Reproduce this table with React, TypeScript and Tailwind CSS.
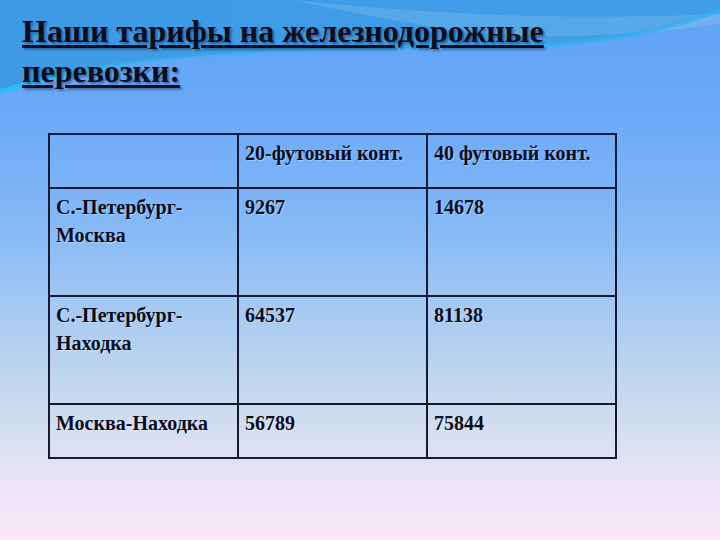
// Slide: railway freight tariffs, title + 3x4 price table over an "ocean" backdrop.
const rows = [
  { route: ['С.-Петербург-', 'Москва'], c20: '9267', c40: '14678', tall: true },
  { route: ['С.-Петербург-', 'Находка'], c20: '64537', c40: '81138', tall: true },
  { route: ['Москва-Находка'], c20: '56789', c40: '75844', tall: false },
];

function Backdrop() {
  return (
    <svg className="absolute inset-0 w-full h-full" viewBox="0 0 720 540" preserveAspectRatio="none">
      <defs>
        <linearGradient id="body" x1="0" y1="0" x2="0" y2="1">
          <stop offset="0" stopColor="#5ea2f4" />
          <stop offset="0.2" stopColor="#6aa9f8" />
          <stop offset="0.4" stopColor="#82b7f6" />
          <stop offset="0.58" stopColor="#a7caf1" />
          <stop offset="0.75" stopColor="#cbdaee" />
          <stop offset="0.87" stopColor="#e6e3f3" />
          <stop offset="1" stopColor="#fce6fa" />
        </linearGradient>
        <linearGradient id="band" x1="0" y1="0" x2="1" y2="0">
          <stop offset="0" stopColor="#3f9ae6" />
          <stop offset="1" stopColor="#419ee6" />
        </linearGradient>
        <linearGradient id="edge" x1="0" y1="0" x2="1" y2="0">
          <stop offset="0" stopColor="#22c4f2" stopOpacity="0.95" />
          <stop offset="0.25" stopColor="#3fb0f0" stopOpacity="0.4" />
          <stop offset="0.7" stopColor="#2cb6ee" stopOpacity="0.55" />
          <stop offset="1" stopColor="#2ab0ea" stopOpacity="0.6" />
        </linearGradient>
      </defs>
      <rect width="720" height="540" fill="url(#body)" />
      <path d="M0,0 H720 V10 C640,40 560,48 450,48 C300,48 120,52 0,92 Z" fill="url(#band)" />
      <path d="M290,0 C400,10 520,22 720,14 V24 C600,40 520,38 450,30 C390,20 340,10 290,0 Z" fill="#ffffff" opacity="0.12" />
      <path d="M0,92 C120,52 300,48 450,48 C560,48 640,40 720,10" fill="none" stroke="url(#edge)" strokeWidth="5" />
    </svg>
  );
}

export default function App() {
  return (
    <div className="relative w-[720px] h-[540px] overflow-hidden font-['Liberation_Serif','Times_New_Roman',serif] text-[#0a0d1f]">
      <Backdrop />
      <div className="relative flex flex-col">
        <h1 className="pl-[22px] pt-[11px] text-[32px] leading-[40px] font-bold underline decoration-[3px] underline-offset-[3px] [text-shadow:2px_2px_2px_rgba(0,0,30,0.35)]">
          Наши тарифы на железнодорожные
          <br />
          перевозки:
        </h1>
        <table className="ml-[48px] mt-[42px] w-[568px] table-fixed border-collapse text-[20px] leading-[28px] font-bold [text-shadow:1px_1px_1px_rgba(255,255,255,0.35)]">
          <tbody>
            <tr className="h-[54px]">
              <td className="w-[189px] border-2 border-[#141a38] align-top px-[6px] py-[4px]"></td>
              <td className="w-[189px] border-2 border-[#141a38] align-top px-[6px] py-[4px]">20-футовый конт.</td>
              <td className="w-[189px] border-2 border-[#141a38] align-top px-[6px] py-[4px]">40 футовый конт.</td>
            </tr>
            {rows.map((r) => (
              <tr key={r.c20} className={r.tall ? 'h-[108px]' : 'h-[54px]'}>
                <td className="border-2 border-[#141a38] align-top px-[6px] py-[4px]">
                  {r.route.map((line) => (
                    <div key={line}>{line}</div>
                  ))}
                </td>
                <td className="border-2 border-[#141a38] align-top px-[6px] py-[4px]">{r.c20}</td>
                <td className="border-2 border-[#141a38] align-top px-[6px] py-[4px]">{r.c40}</td>
              </tr>
            ))}
          </tbody>
        </table>
      </div>
    </div>
  );
}
